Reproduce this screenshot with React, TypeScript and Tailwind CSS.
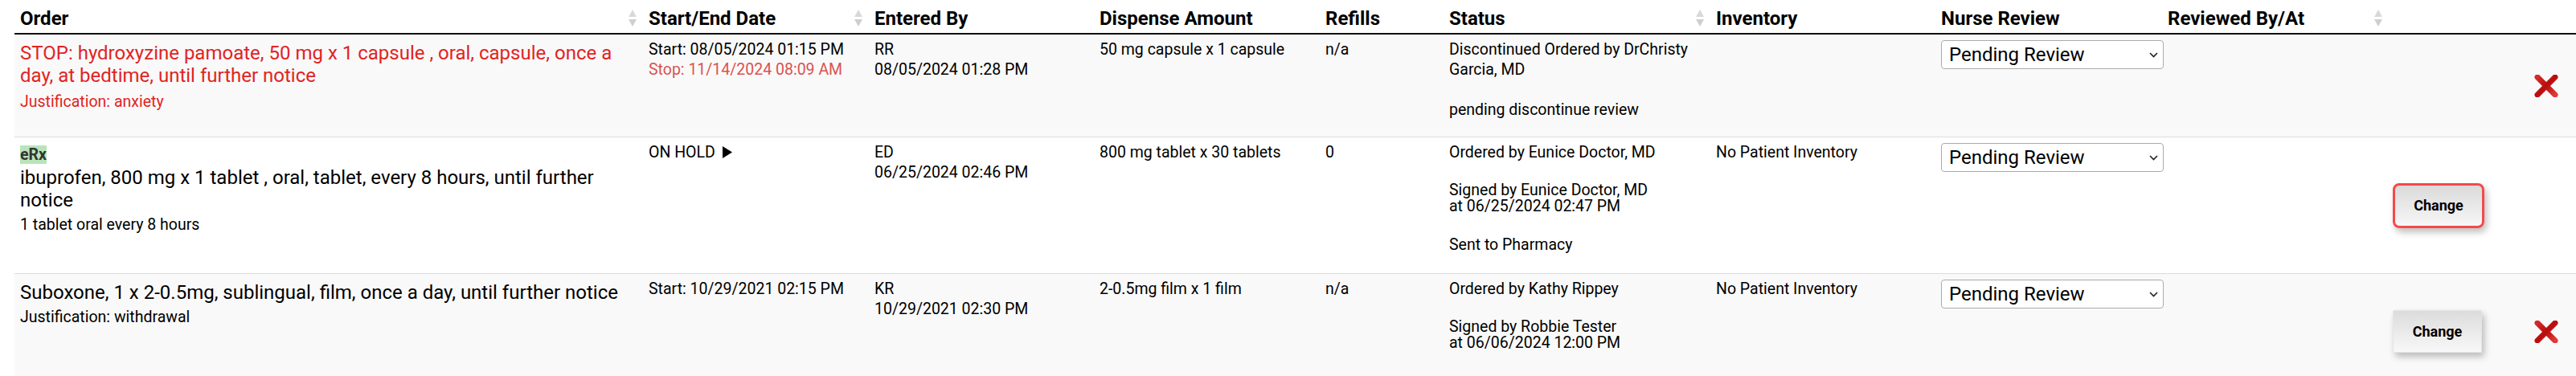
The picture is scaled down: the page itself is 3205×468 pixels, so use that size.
import React from "react";

const grid =
  "grid grid-cols-[782px_281px_280px_281px_154px_332px_280px_282px_282px_233px]";
const small = "px-[7px] pt-[6px] text-[19.5px] leading-[25px]";

const headers = [
  { label: "Order", sort: true },
  { label: "Start/End Date", sort: true },
  { label: "Entered By", sort: false },
  { label: "Dispense Amount", sort: false },
  { label: "Refills", sort: false },
  { label: "Status", sort: true },
  { label: "Inventory", sort: false },
  { label: "Nurse Review", sort: false },
  { label: "Reviewed By/At", sort: true },
  { label: "", sort: false },
];

function SortIcon() {
  return (
    <svg width="10" height="21" viewBox="0 0 10 21">
      <path d="M5 0 L10 9 L0 9 Z" fill="#d9d9d9" />
      <path d="M0 12 L10 12 L5 21 Z" fill="#cfcfcf" />
    </svg>
  );
}

function DeleteIcon() {
  return (
    <svg width="30" height="28" viewBox="0 0 30 28">
      <defs>
        <linearGradient id="xr" x1="0" y1="0" x2="1" y2="1">
          <stop offset="0" stopColor="#d42a2a" />
          <stop offset="0.5" stopColor="#b80d0d" />
          <stop offset="1" stopColor="#e23a3a" />
        </linearGradient>
      </defs>
      <path d="M4 3 L26 25" stroke="url(#xr)" strokeWidth="7" strokeLinecap="round" />
      <path d="M26 3 L4 25" stroke="url(#xr)" strokeWidth="7" strokeLinecap="round" />
    </svg>
  );
}

function NurseSelect() {
  return (
    <div className="relative ml-[7px] mt-[7px] h-[36px] w-[277px]">
      <select
        defaultValue="pending"
        className="h-full w-full appearance-none rounded-[4px] border border-[#ababab] bg-white pl-[9px] text-[24px] leading-[28px] text-black outline-none"
      >
        <option value="pending">Pending Review</option>
        <option value="reviewed">Reviewed</option>
      </select>
      <svg
        className="pointer-events-none absolute right-[7px] top-[15px]"
        width="11"
        height="7"
        viewBox="0 0 11 7"
      >
        <path d="M1 1 L5.5 5.5 L10 1" stroke="#222" strokeWidth="1.6" fill="none" />
      </svg>
    </div>
  );
}

function ChangeButton({ focused }: { focused?: boolean }) {
  return focused ? (
    <button className="h-[56px] w-[114px] rounded-[8px] border-[3px] border-[#f44a4a] bg-linear-to-b from-[#dadada] to-[#f7f7f7] text-[18px] font-bold text-black shadow-[3px_5px_9px_rgba(0,0,0,0.25)]">
      Change
    </button>
  ) : (
    <button className="h-[53px] w-[111px] rounded-[2px] border border-[#e4e4e4] bg-linear-to-b from-[#dcdcdc] to-[#f8f8f8] text-[18px] font-bold text-black shadow-[3px_5px_9px_rgba(0,0,0,0.25)]">
      Change
    </button>
  );
}

function Actions({ button, del }: { button?: "focused" | "plain"; del?: boolean }) {
  return (
    <div className="flex items-center pl-[5px]">
      <div className="w-[176px]">
        {button === "focused" && <ChangeButton focused />}
        {button === "plain" && <ChangeButton />}
      </div>
      {del && <DeleteIcon />}
    </div>
  );
}

export default function App() {
  return (
    <div className="min-h-[468px] overflow-hidden bg-white pl-[18px] font-[Roboto,'Liberation_Sans',sans-serif] text-black">
      <div className={`${grid} h-[43px] border-b-2 border-[#111]`}>
        {headers.map((h, i) => (
          <div key={i} className="flex items-center justify-between pl-[7px] pr-[8px] pt-[4px]">
            <span className="text-[24px] font-bold leading-[28px]">{h.label}</span>
            {h.sort && <SortIcon />}
          </div>
        ))}
      </div>

      {/* row 1 */}
      <div className={`${grid} h-[127px] bg-[#f9f9f9]`}>
        <div className="px-[7px] pt-[9px] text-[#e2231f]">
          <div className="text-[24px] leading-[28px]">
            STOP: hydroxyzine pamoate, 50 mg x 1 capsule , oral, capsule, once a day, at bedtime, until further notice
          </div>
          <div className="mt-[6px] text-[19.5px] leading-[25px]">Justification: anxiety</div>
        </div>
        <div className={small}>
          <div>Start: 08/05/2024 01:15 PM</div>
          <div className="text-[#d9534f]">Stop: 11/14/2024 08:09 AM</div>
        </div>
        <div className={small}>
          <div>RR</div>
          <div>08/05/2024 01:28 PM</div>
        </div>
        <div className={small}>50 mg capsule x 1 capsule</div>
        <div className={small}>n/a</div>
        <div className={`${small} pr-[14px]`}>
          <div>Discontinued Ordered by DrChristy Garcia, MD</div>
          <div className="mt-[25px]">pending discontinue review</div>
        </div>
        <div />
        <div>
          <NurseSelect />
        </div>
        <div />
        <Actions del />
      </div>

      {/* row 2 */}
      <div className={`${grid} h-[170px] border-t border-[#dddddd] bg-white`}>
        <div className="px-[7px] pt-[9px]">
          <div className="leading-[26px]">
            <span className="bg-[#b9e4b9] text-[19.5px] font-bold text-[#333]">eRx</span>
          </div>
          <div className="text-[24px] leading-[28px]">
            ibuprofen, 800 mg x 1 tablet , oral, tablet, every 8 hours, until further notice
          </div>
          <div className="mt-[4px] text-[19.5px] leading-[25px]">1 tablet oral every 8 hours</div>
        </div>
        <div className={small}>
          <div className="flex items-center gap-[9px]">
            <span>ON HOLD</span>
            <svg width="12" height="15" viewBox="0 0 12 15">
              <path d="M0 0 L12 7.5 L0 15 Z" fill="#000" />
            </svg>
          </div>
        </div>
        <div className={small}>
          <div>ED</div>
          <div>06/25/2024 02:46 PM</div>
        </div>
        <div className={small}>800 mg tablet x 30 tablets</div>
        <div className={small}>0</div>
        <div className={`${small} pr-[14px]`}>
          <div>Ordered by Eunice Doctor, MD</div>
          <div className="mt-[25px] leading-[20px]">
            <div>Signed by Eunice Doctor, MD</div>
            <div>at 06/25/2024 02:47 PM</div>
          </div>
          <div className="mt-[25px]">Sent to Pharmacy</div>
        </div>
        <div className={small}>No Patient Inventory</div>
        <div>
          <NurseSelect />
        </div>
        <div />
        <Actions button="focused" />
      </div>

      {/* row 3 */}
      <div className={`${grid} h-[144px] border-t border-[#dddddd] bg-[#f9f9f9]`}>
        <div className="px-[7px] pt-[9px]">
          <div className="text-[24px] leading-[28px]">
            Suboxone, 1 x 2-0.5mg, sublingual, film, once a day, until further notice
          </div>
          <div className="mt-[4px] text-[19.5px] leading-[25px]">Justification: withdrawal</div>
        </div>
        <div className={small}>Start: 10/29/2021 02:15 PM</div>
        <div className={small}>
          <div>KR</div>
          <div>10/29/2021 02:30 PM</div>
        </div>
        <div className={small}>2-0.5mg film x 1 film</div>
        <div className={small}>n/a</div>
        <div className={`${small} pr-[14px]`}>
          <div>Ordered by Kathy Rippey</div>
          <div className="mt-[25px] leading-[20px]">
            <div>Signed by Robbie Tester</div>
            <div>at 06/06/2024 12:00 PM</div>
          </div>
        </div>
        <div className={small}>No Patient Inventory</div>
        <div>
          <NurseSelect />
        </div>
        <div />
        <Actions button="plain" del />
      </div>
    </div>
  );
}
